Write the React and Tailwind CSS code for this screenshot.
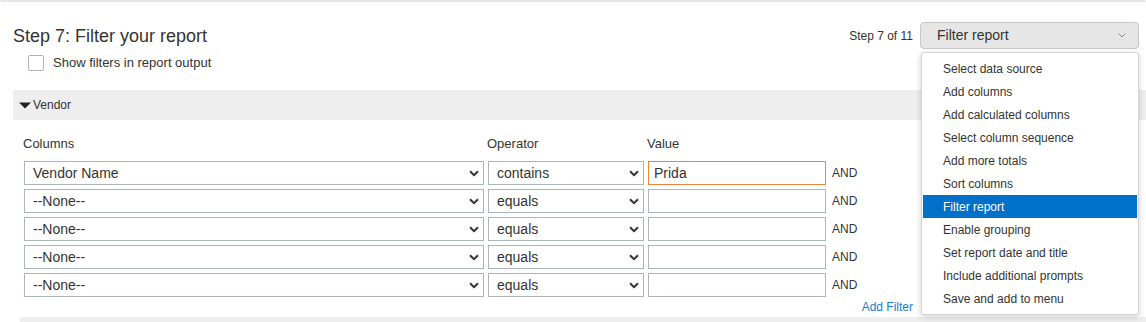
import { useState } from 'react';

const steps = [
  'Select data source',
  'Add columns',
  'Add calculated columns',
  'Select column sequence',
  'Add more totals',
  'Sort columns',
  'Filter report',
  'Enable grouping',
  'Set report date and title',
  'Include additional prompts',
  'Save and add to menu',
];

const filters = [
  { column: 'Vendor Name', operator: 'contains', value: 'Prida' },
  { column: '--None--', operator: 'equals', value: '' },
  { column: '--None--', operator: 'equals', value: '' },
  { column: '--None--', operator: 'equals', value: '' },
  { column: '--None--', operator: 'equals', value: '' },
];

const SelectChevron = () => (
  <svg width="10" height="7" viewBox="0 0 10 7" className="shrink-0">
    <path d="M1 1.2 L5 5.2 L9 1.2" fill="none" stroke="#333" strokeWidth="2" />
  </svg>
);

const FakeSelect = ({ label, width }) => (
  <div
    className={`${width} h-[24px] border border-[#a9b7bb] bg-white flex items-center justify-between pl-[8px] pr-[4px] text-[14px] text-[#333]`}
  >
    <span>{label}</span>
    <SelectChevron />
  </div>
);

const App = () => {
  const [current] = useState('Filter report');

  return (
    <div
      className="relative w-full h-[322px] overflow-hidden bg-white text-[#333]"
      style={{ fontFamily: '"Liberation Sans", Arial, sans-serif' }}
    >
      <div className="h-[2px] bg-[#e6e6e6] rounded-t-[3px]" />

      {/* Kopfzeile */}
      <div className="flex justify-between items-start pl-[13px] pr-[7px] pt-[20px]">
        <div className="flex flex-col">
          <h1 className="mt-[3px] h-[22px] leading-[22px] text-[18px] font-normal text-[#333]">
            Step 7: Filter your report
          </h1>
          <label className="mt-[8px] h-[16px] flex items-center">
            <span className="ml-[15px] w-[16px] h-[16px] border border-[#a9b7bb] rounded-[2px] bg-white" />
            <span className="ml-[9px] text-[13px] leading-[16px]">Show filters in report output</span>
          </label>
        </div>
        <div className="flex items-center gap-[7px]">
          <span className="text-[12px]">Step 7 of 11</span>
          <div className="w-[219px] h-[27px] bg-[#e6e6e6] border border-[#c6c6c6] rounded-[4px] flex items-center justify-between pl-[16px] pr-[12px] text-[14px]">
            <span>{current}</span>
            <svg width="8" height="5" viewBox="0 0 8 5">
              <path d="M0.5 0.5 L4 4 L7.5 0.5" fill="none" stroke="#888" strokeWidth="1" />
            </svg>
          </div>
        </div>
      </div>

      {/* Vendor-Leiste */}
      <div className="mt-[19px] ml-[13px] h-[30px] bg-[#eeeeee] flex items-center pl-[6px] gap-[2px] text-[12px]">
        <svg width="12" height="7" viewBox="0 0 12 7">
          <path d="M0 0.5 H12 L6 6.5 Z" fill="#222" />
        </svg>
        <span>Vendor</span>
      </div>

      {/* Filter */}
      <div className="pl-[24px]">
        <div className="mt-[16px] h-[16px] flex text-[13px] leading-[16px]">
          <span className="w-[464px] -ml-[1px]">Columns</span>
          <span className="w-[160px]">Operator</span>
          <span>Value</span>
        </div>
        <div className="mt-[9px] flex flex-col gap-[4px]">
          {filters.map((f, i) => (
            <div key={i} className="flex items-center">
              <FakeSelect label={f.column} width="w-[460px]" />
              <div className="ml-[4px]">
                <FakeSelect label={f.operator} width="w-[156px]" />
              </div>
              <div
                className={`ml-[4px] w-[178px] h-[24px] border bg-white flex items-center pl-[5px] text-[14px] ${
                  i === 0 ? 'border-[#e8873a]' : 'border-[#a9b7bb]'
                }`}
              >
                {f.value}
              </div>
              <span className="ml-[6px] text-[12px]">AND</span>
            </div>
          ))}
        </div>
        <div className="w-[889px] mt-[3px] h-[14px] flex justify-end">
          <a className="text-[12px] leading-[14px] text-[#1a7bd0]">Add Filter</a>
        </div>
      </div>

      <div className="mt-[3px] ml-[20px] h-[10px] bg-[#eeeeee]" />

      {/* Schritt-Menü */}
      <div className="absolute left-[921px] top-[52px] w-[218px] bg-white border border-[#d4d4d4] rounded-[3px] shadow-[0_2px_6px_rgba(0,0,0,0.18)] py-[4px] px-[1px]">
        {steps.map((s) => (
          <div
            key={s}
            className={`h-[23px] pl-[20px] flex items-center text-[12px] ${
              s === current ? 'bg-[#0070c9] text-white' : 'text-[#333]'
            }`}
          >
            {s}
          </div>
        ))}
      </div>
    </div>
  );
};

export default App;
